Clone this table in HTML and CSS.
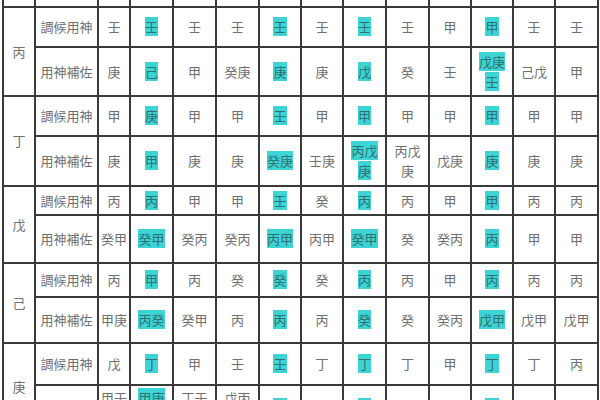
FILE: index.html
```html
<!DOCTYPE html>
<html lang="zh-Hant">
<head>
<meta charset="utf-8">
<title>調候用神</title>
<link rel="stylesheet" href="styles.css">
</head>
<body>
<table class="grid">
<colgroup>
<col class="c-g"><col class="c-l"><col class="c-1">
<col class="c-a"><col class="c-a"><col class="c-a"><col class="c-b"><col class="c-b"><col class="c-a"><col class="c-a"><col class="c-b"><col class="c-b"><col class="c-b"><col class="c-a">
</colgroup>
<tr class="r0"><td></td><td></td><td></td><td></td><td></td><td></td><td></td><td></td><td></td><td></td><td></td><td></td><td></td><td></td></tr>

<tr class="h40"><td class="g" rowspan="2">丙</td><td class="lbl">調候用神</td><td class="d1">壬</td><td><span class="hl">壬</span></td><td>壬</td><td>壬</td><td><span class="hl">壬</span></td><td>壬</td><td><span class="hl">壬</span></td><td>壬</td><td>甲</td><td><span class="hl">甲</span></td><td>壬</td><td>壬</td></tr>
<tr class="h49"><td class="lbl">用神補佐</td><td class="d1">庚</td><td><span class="hl">己</span></td><td>甲</td><td>癸庚</td><td><span class="hl">庚</span></td><td>庚</td><td><span class="hl">戊</span></td><td>癸</td><td>壬</td><td><span class="hl">戊庚壬</span></td><td>己戊</td><td>甲</td></tr>

<tr class="h40"><td class="g" rowspan="2">丁</td><td class="lbl">調候用神</td><td class="d1">甲</td><td><span class="hl">庚</span></td><td>甲</td><td>甲</td><td><span class="hl">壬</span></td><td>甲</td><td><span class="hl">甲</span></td><td>甲</td><td>甲</td><td><span class="hl">甲</span></td><td>甲</td><td>甲</td></tr>
<tr class="h50"><td class="lbl">用神補佐</td><td class="d1">庚</td><td><span class="hl">甲</span></td><td>庚</td><td>庚</td><td><span class="hl">癸庚</span></td><td>壬庚</td><td><span class="hl">丙戊庚</span></td><td>丙戊庚</td><td>戊庚</td><td><span class="hl">庚</span></td><td>庚</td><td>庚</td></tr>

<tr class="h29"><td class="g" rowspan="2">戊</td><td class="lbl">調候用神</td><td class="d1">丙</td><td><span class="hl">丙</span></td><td>甲</td><td>甲</td><td><span class="hl">壬</span></td><td>癸</td><td><span class="hl">丙</span></td><td>丙</td><td>甲</td><td><span class="hl">甲</span></td><td>丙</td><td>丙</td></tr>
<tr class="h48"><td class="lbl">用神補佐</td><td class="d1">癸甲</td><td><span class="hl">癸甲</span></td><td>癸丙</td><td>癸丙</td><td><span class="hl">丙甲</span></td><td>丙甲</td><td><span class="hl">癸甲</span></td><td>癸</td><td>癸丙</td><td><span class="hl">丙</span></td><td>甲</td><td>甲</td></tr>

<tr class="h34"><td class="g" rowspan="2">己</td><td class="lbl">調候用神</td><td class="d1">丙</td><td><span class="hl">甲</span></td><td>丙</td><td>癸</td><td><span class="hl">癸</span></td><td>癸</td><td><span class="hl">丙</span></td><td>丙</td><td>甲</td><td><span class="hl">丙</span></td><td>丙</td><td>丙</td></tr>
<tr class="h46"><td class="lbl">用神補佐</td><td class="d1">甲庚</td><td><span class="hl">丙癸</span></td><td>癸甲</td><td>丙</td><td><span class="hl">丙</span></td><td>丙</td><td><span class="hl">癸</span></td><td>癸</td><td>癸丙</td><td><span class="hl">戊甲</span></td><td>戊甲</td><td>戊甲</td></tr>

<tr class="h42"><td class="g" rowspan="2">庚</td><td class="lbl">調候用神</td><td class="d1">戊</td><td><span class="hl">丁</span></td><td>甲</td><td>壬</td><td><span class="hl">壬</span></td><td>丁</td><td><span class="hl">丁</span></td><td>丁</td><td>甲</td><td><span class="hl">丁</span></td><td>丁</td><td>丙</td></tr>
<tr class="h46"><td class="lbl">用神補佐</td><td class="d1">甲壬丙丁</td><td><span class="hl">甲庚丙</span></td><td>丁壬癸</td><td>戊丙丁</td><td><span class="hl">癸</span></td><td>甲</td><td><span class="hl">甲</span></td><td>甲丙</td><td>壬</td><td><span class="hl">丙</span></td><td>甲丙</td><td>丁甲</td></tr>
</table>
</body>
</html>
```

FILE: styles.css
```css
html, body {
  margin: 0;
  padding: 0;
  background: #ffffff;
}
body {
  width: 600px;
  height: 400px;
  overflow: hidden;
  font-family: "Noto Sans CJK TC", "Noto Sans CJK SC", sans-serif;
}
.grid {
  border-collapse: collapse;
  table-layout: fixed;
  width: 597px;
  margin-left: 2px;
}
.c-g { width: 32px; }
.c-l { width: 63px; }
.c-1 { width: 32px; }
.c-a { width: 43px; }
.c-b { width: 42px; }
.grid td {
  border: 2px solid #3a3a3a;
  padding: 0 3px;
  text-align: center;
  vertical-align: middle;
  font-size: 13px;
  line-height: 20px;
  color: #6f6f6f;
  overflow: hidden;
}
.grid td.d1 { padding: 0 1px; }
.grid td.lbl { padding: 0 2px; white-space: nowrap; }
.grid td.g { color: #707070; }
.r0 td { border-top: none; height: 6px; padding: 0; }
.hl {
  background: #3cd4d4;
  color: #2f7070;
  -webkit-box-decoration-break: clone;
  box-decoration-break: clone;
}
.h29 { height: 29px; }
.h34 { height: 34px; }
.h40 { height: 40px; }
.h42 { height: 42px; }
.h46 { height: 46px; }
.h48 { height: 48px; }
.h49 { height: 49px; }
.h50 { height: 50px; }
```
